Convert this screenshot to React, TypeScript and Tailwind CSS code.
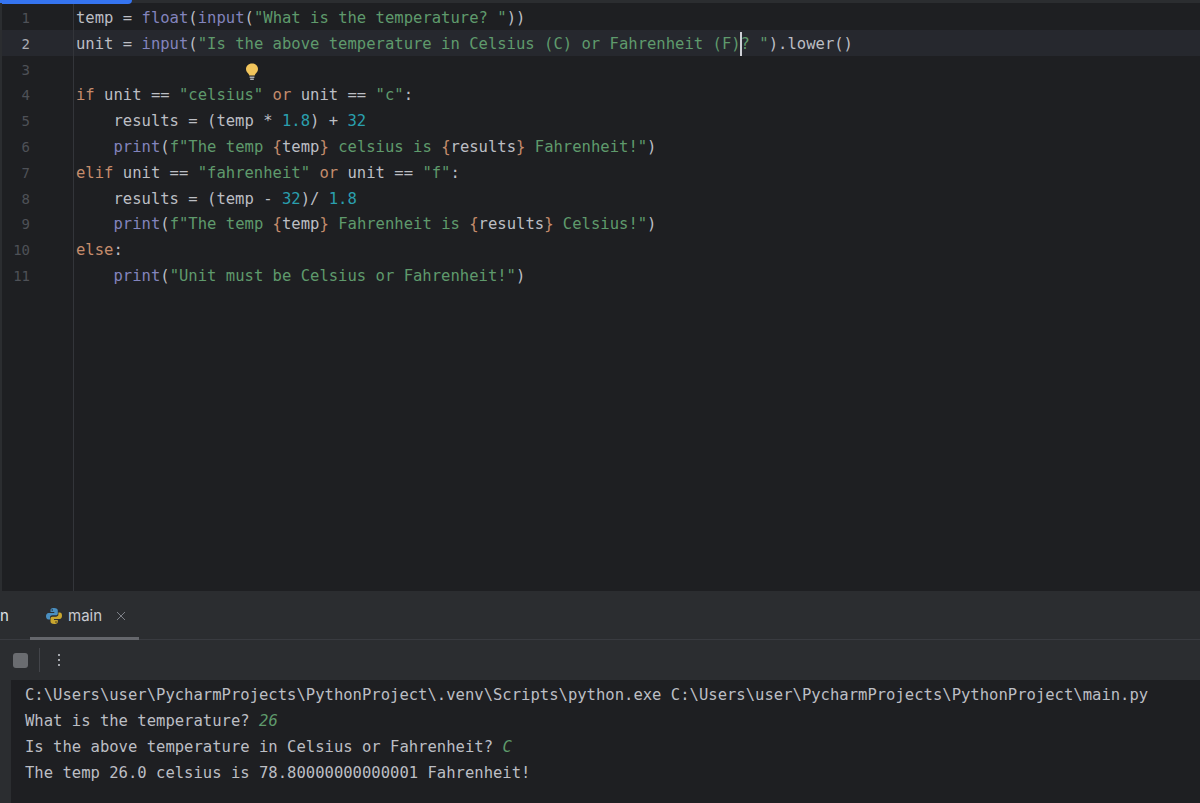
import { ReactNode } from 'react';

const K = ({ children }: { children: ReactNode }) => <span className="text-[#c58c6c]">{children}</span>;
const S = ({ children }: { children: ReactNode }) => <span className="text-[#5f9a6c]">{children}</span>;
const F = ({ children }: { children: ReactNode }) => <span className="text-[#8384bd]">{children}</span>;
const N = ({ children }: { children: ReactNode }) => <span className="text-[#2a9fae]">{children}</span>;

const codeLines: ReactNode[] = [
  <>temp = <F>float</F>(<F>input</F>(<S>"What is the temperature? "</S>))</>,
  <>
    unit = <F>input</F>(<S>"Is the above temperature in Celsius (C) or Fahrenheit (F)</S>
    <span className="relative">
      <span className="absolute -left-px -top-[3px] h-[24px] w-0.5 bg-[#ced0d6]" />
    </span>
    <S>?</S> <S>"</S>).lower()
  </>,
  <></>,
  <><K>if</K> unit == <S>"celsius"</S> <K>or</K> unit == <S>"c"</S>:</>,
  <>    results = (temp * <N>1.8</N>) + <N>32</N></>,
  <>    <F>print</F>(<S>f"The temp </S><K>{'{'}</K>temp<K>{'}'}</K><S> celsius is </S><K>{'{'}</K>results<K>{'}'}</K><S> Fahrenheit!"</S>)</>,
  <><K>elif</K> unit == <S>"fahrenheit"</S> <K>or</K> unit == <S>"f"</S>:</>,
  <>    results = (temp - <N>32</N>)/ <N>1.8</N></>,
  <>    <F>print</F>(<S>f"The temp </S><K>{'{'}</K>temp<K>{'}'}</K><S> Fahrenheit is </S><K>{'{'}</K>results<K>{'}'}</K><S> Celsius!"</S>)</>,
  <><K>else</K>:</>,
  <>    <F>print</F>(<S>"Unit must be Celsius or Fahrenheit!"</S>)</>,
];

const PythonIcon = () => (
  <svg width="18" height="18" viewBox="0 0 18 18">
    <path d="M9 1C5.8 1 5.5 2.2 5.5 3.5V5H9.3V6H3.6C2 6 1 7.3 1 9.2C1 11.2 2 12.4 3.4 12.4H5V10.4C5 9 6.1 8.3 7.4 8.3H11C12.1 8.3 12.8 7.5 12.8 6.4V3.5C12.8 2 11.6 1 9 1Z" fill="#4a8fc0" />
    <path d="M9.2 17C12.4 17 12.8 15.8 12.8 14.5V13H9V12H14.6C16.2 12 17 10.7 17 8.8C17 6.8 16.2 5.6 14.8 5.6H13.4V7.6C13.4 9 12.2 9.7 11 9.7H7.3C6.2 9.7 5.5 10.5 5.5 11.6V14.5C5.5 16 6.7 17 9.2 17Z" fill="#c9a62f" />
    <circle cx="7.2" cy="3" r="0.7" fill="#1e1f22" />
    <circle cx="11" cy="15" r="0.7" fill="#1e1f22" />
  </svg>
);

export default function App() {
  return (
    <div className="flex h-[803px] w-[1200px] flex-col overflow-hidden bg-[#1e1f22] font-['DejaVu_Sans_Mono',monospace] text-[#bcbec4]">
      {/* top edge with the blue progress bar */}
      <div className="h-[3px] shrink-0 bg-[#2b2d30]">
        <div className="h-[4px] w-[132px] rounded-br-sm bg-[#3574f0]" />
      </div>

      {/* Editor */}
      <div className="relative flex h-[588px] shrink-0 border-l-2 border-[#2b2d30] pt-[1px]">
        <div className="w-[72px] shrink-0 border-r border-[#33353a]">
          {codeLines.map((_, i) => (
            <div
              key={i}
              className={`h-[25.8px] pr-[43px] pt-[2px] text-right text-[14px] leading-[25.8px] ${
                i === 1 ? 'bg-[#26282e] text-[#a9abb2]' : 'text-[#4e5157]'
              }`}
            >
              {i + 1}
            </div>
          ))}
        </div>
        <div className="flex-1 text-[15.56px]">
          {codeLines.map((line, i) => (
            <div
              key={i}
              className={`h-[25.8px] whitespace-pre pl-[2px] pt-[2px] leading-[25.8px] ${i === 1 ? 'bg-[#26282e]' : ''}`}
            >
              {line}
            </div>
          ))}
        </div>
        {/* intention bulb */}
        <svg className="absolute left-[243px] top-[60px]" width="14" height="18" viewBox="0 0 14 18">
          <path d="M7 0.5C3.4 0.5 1 3 1 6C1 8.2 2.2 9.5 3.4 10.8C4 11.5 4.2 12 4.3 12.6H9.7C9.8 12 10 11.5 10.6 10.8C11.8 9.5 13 8.2 13 6C13 3 10.6 0.5 7 0.5Z" fill="#f2c55c" />
          <rect x="4.6" y="13.6" width="4.8" height="1.2" fill="#ced0d6" />
          <rect x="5.2" y="15.6" width="3.6" height="1.2" fill="#ced0d6" />
        </svg>
      </div>

      {/* Run panel */}
      <div className="flex h-[49px] shrink-0 items-stretch border-b border-[#393b40] bg-[#2b2d30] pt-[2px]">
        <span className="flex w-[45px] shrink-0 items-center font-['Inter',sans-serif] text-[15px] text-[#dfe1e5]">n</span>
        <div className="relative flex w-[108px] items-center">
          <PythonIcon />
          <span className="ml-[5px] font-['Inter',sans-serif] text-[15px] text-[#c9cbd1]">main</span>
          <svg className="ml-[14px]" width="10" height="10" viewBox="0 0 10 10" stroke="#7d8087" strokeWidth="1">
            <path d="M1 1L9 9M9 1L1 9" />
          </svg>
          <div className="absolute -bottom-px -left-[15px] h-[3px] w-[109px] bg-[#65676c]" />
        </div>
      </div>

      <div className="flex h-[40px] shrink-0 items-center bg-[#2b2d30] pl-[13px]">
        <div className="h-[15px] w-[15px] rounded-[3px] bg-[#6a6c70]" />
        <div className="ml-[11px] h-[24px] w-px bg-[#43454a]" />
        <div className="ml-[18px] flex flex-col gap-[3px]">
          <div className="h-[2px] w-[2px] rounded-full bg-[#ced0d6]" />
          <div className="h-[2px] w-[2px] rounded-full bg-[#ced0d6]" />
          <div className="h-[2px] w-[2px] rounded-full bg-[#ced0d6]" />
        </div>
      </div>

      {/* Console */}
      <div className="flex flex-1">
        <div className="w-[11px] shrink-0 bg-[#2b2d30]" />
        <div className="flex-1 whitespace-pre pl-[14px] pt-[2px] text-[15.56px] leading-[26px]">
          <div>C:\Users\user\PycharmProjects\PythonProject\.venv\Scripts\python.exe C:\Users\user\PycharmProjects\PythonProject\main.py</div>
          <div>What is the temperature? <span className="italic text-[#5f9a6c]">26</span></div>
          <div>Is the above temperature in Celsius or Fahrenheit? <span className="italic text-[#5f9a6c]">C</span></div>
          <div>The temp 26.0 celsius is 78.80000000000001 Fahrenheit!</div>
        </div>
      </div>
    </div>
  );
}
